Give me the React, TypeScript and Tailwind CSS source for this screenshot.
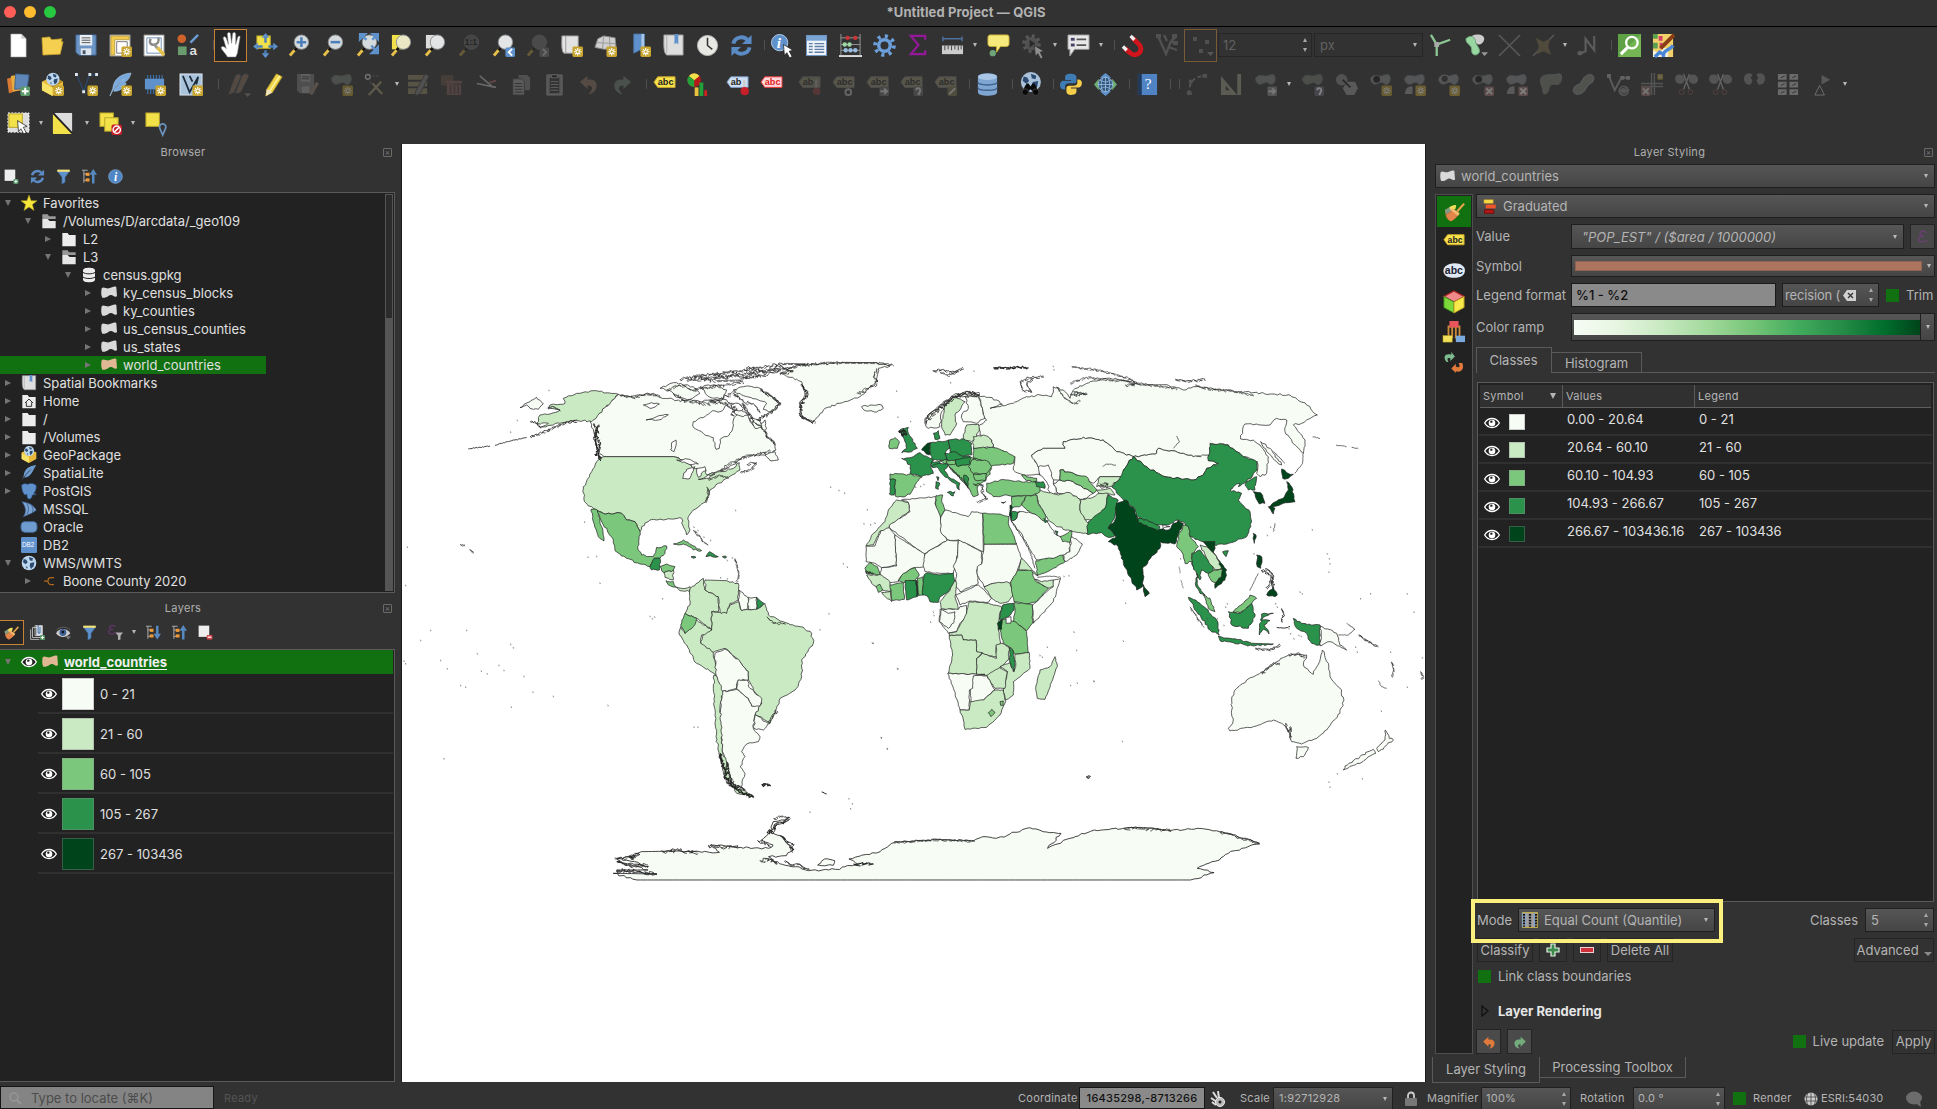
import React from "react";
import type { ReactNode } from "react";

/* ------------------------------------------------------------------ */
/* Icons (24 x 24 grid)                                                */
/* ------------------------------------------------------------------ */

const Svg = ({ s = 24, children, o = 1 }: { s?: number; children: ReactNode; o?: number }) => (
  <svg width={s} height={s} viewBox="0 0 24 24" opacity={o} className="shrink-0 overflow-visible">
    {children}
  </svg>
);

const Spark = ({ x = 13, y = 13, s = 11 }: { x?: number; y?: number; s?: number }) => (
  <g transform={`translate(${x} ${y}) scale(${s / 11})`}>
    <rect width="11" height="11" rx="1.5" fill="#c8a52e" />
    <path d="M5.5 1.5v8M1.5 5.5h8M2.7 2.7l5.6 5.6M8.3 2.7L2.7 8.3" stroke="#fff" strokeWidth="1.2" />
    <circle cx="5.5" cy="5.5" r="1.2" fill="#c8a52e" />
  </g>
);
const Box = ({ c = "#5b9a68", d = "M5 1.5v7M1.5 5h7", x = 14, y = 14 }: { c?: string; d?: string; x?: number; y?: number }) => (
  <g transform={`translate(${x} ${y})`}>
    <rect width="10" height="10" rx="1.5" fill={c} />
    <path d={d} stroke="#fff" strokeWidth="2" fill="none" />
  </g>
);
const Lens = ({ fill = "#d5dadd", children }: { fill?: string; children?: ReactNode }) => (
  <>
    <path d="M8.500 15L2 22.500" stroke="#e8c04a" strokeWidth="3" />
    <path d="M9 14.500l-2 2.500" stroke="#111" strokeWidth="3" />
    <circle cx="14" cy="8.500" r="7.500" fill={fill} stroke="#8b8f91" />
    {children}
  </>
);
const Cursor = ({ x = 12, y = 10 }: { x?: number; y?: number }) => (
  <path transform={`translate(${x} ${y})`} d="M0 0l10 6-4 1 3 5.500-2.500 1.500-3-5.500-2.500 3z" fill="#fff" stroke="#222" strokeWidth=".8" />
);
const Tag = ({ fill = "#f7e14c", ink = "#222", text = "abc", stroke = "#c9a92a" }: { fill?: string; ink?: string; text?: string; stroke?: string }) => (
  <>
    <path d="M1 9.500l4-5.500h18v11H5z" fill={fill} stroke={stroke} />
    <text x="5" y="12.800" fontSize="9.500" fontWeight="700" fill={ink} fontFamily="Liberation Sans, sans-serif">{text}</text>
  </>
);
const Blob = ({ f = "#8d9092", d = "M2 5c4-5 7-1 11-2s8-3 9 1-1 8-4 8-3-3-6-2-6 3-8 1-3-4-2-6z" }: { f?: string; d?: string }) => (
  <path d={d} fill={f} stroke="#6d7072" />
);

const Refresh = () => (
  <g fill="none" stroke="#5a8bc4" strokeWidth="4">
    <path d="M3.500 10C5 3 14 1.500 18 6M20.500 14C19 21 10 22.500 6 18" />
    <path d="M22.500 1v9.500h-10zM1.500 23v-9.500h10z" fill="#5a8bc4" stroke="none" />
  </g>
);
const Funnel = () => (
  <>
    <path d="M2 3h20l-7.500 10v8l-5 3V13z" fill="#5f92cc" stroke="#3e6896" />
    <path d="M2 1h20v3.500H2z" fill="#f3e27a" />
  </>
);
const Tree = ({ up = true }: { up?: boolean }) => (
  <>
    <path d="M0 2h9M3 2v20M3 8h5M3 18h5" stroke="#aaa" strokeWidth="1.600" fill="none" />
    <rect x="6" y="6" width="6" height="5" fill="#f09a38" />
    <rect x="6" y="15" width="6" height="5" fill="#f09a38" />
    {up ? <path d="M18 0l6 9h-4v14h-4V9h-4z" fill="#5689c0" /> : <path d="M18 23l6-9h-4V1h-4v13h-4z" fill="#5689c0" />}
  </>
);
const Brush = () => (
  <>
    <path d="M1 10c3-1 5-3 7-4l9 9c-2 4-6 6-9 8-3-1-5-3-6-6z" fill="#c9703a" />
    <path d="M1 10c3-1 5-3 7-4l3 3-8 6c-1-1-2-3-2-5z" fill="#7f9c80" />
    <path d="M8 6c2-1 4-2 6-1l-1 4-4 2-3-3z" fill="#efe05a" />
    <path d="M3 16l9-6 4 5c-2 4-5 6-8 8-3-1-4-3-5-7z" fill="#e2854a" />
    <path d="M9 8l9 6-2 3-9-7z" fill="#f3b96e" />
    <path d="M15 12l8-9" stroke="#e8a24c" strokeWidth="2.500" />
  </>
);
const Poly = ({ f = "#d9d9d9" }: { f?: string }) => (
  <path d="M1 5c3-3 7 1 11 0s8-4 11-2l1 14c-4 2-6-2-9-2-4 0-6 5-13 4-2-3-2-9-1-14z" fill={f} />
);
const Globe = ({ f = "#bcd6ee", l = "#2c4a70" }: { f?: string; l?: string }) => (
  <>
    <circle cx="12" cy="12" r="11" fill={f} />
    <path d="M4 6l4 1 2 4-3 3-4-3zM12 3l6 2-1 4-4-1zM14 12l6-1-1 6-4 4-2-5zM7 17l3 1-1 3z" fill={l} />
  </>
);
const Page = () => <path d="M4 0h11l5 5v19H4z" fill="#fff" stroke="#999" strokeWidth=".6" />;

const icons: Record<string, ReactNode> = {
  new: <><Page /><path d="M15 0v5h5" fill="#ccc" /></>,
  open: <path d="M1 4l8-1 2 3 11-1-1 3h2l-3 13-18 1z" fill="#f5cf50" stroke="#c79f2a" strokeWidth=".8" />,
  save: <><path d="M1 1h21v21H4l-3-3z" fill="#6c94c4" stroke="#456a99" /><path d="M5 1h13v11H5z" fill="#e8eef4" /><path d="M7 4h9M7 6.500h9M7 9h9" stroke="#555" /><path d="M6 15h11v7H6z" fill="#dfe5ec" /><path d="M8 17h3v4H8z" fill="#456" /></>,
  layout: <><path d="M1 1h21v22H1z" fill="#fff" stroke="#888" /><path d="M2 2h19v4H6v16H2z" fill="#f1cb4d" stroke="#a8872a" strokeWidth=".7" /><path d="M8 8h11v12H8z" fill="none" stroke="#777" /><Spark /></>,
  wrench: <><path d="M1 1h21v22H1z" fill="#fff" stroke="#888" /><path d="M4 4h15v16H4z" fill="none" stroke="#6c8fb8" /><path d="M8 5c-2 4 0 7 4 6s5-3 4-7" stroke="#888" strokeWidth="2.500" fill="none" /><path d="M12 11l4 5" stroke="#999" strokeWidth="3" /><path d="M15 14l7 8" stroke="#e6c04a" strokeWidth="3.500" /></>,
  style: <><circle cx="5" cy="5" r="4.500" fill="#d0622c" /><path d="M14 9l8-8" stroke="#6c9cd0" strokeWidth="2.500" /><rect x="1" y="13" width="9" height="9" fill="#6b9c70" /><text x="13" y="22" fontSize="14" fontWeight="700" fill="#ddd" fontFamily="Liberation Sans, sans-serif">a</text></>,
  hand: <path d="M8 24c-2-4-6-7-6-9 1-2 3-1 5 1L4 6c0-2 2-2 3 0l2 6-1-10c0-2 3-2 3 0l1 9 1-9c0-2 3-2 3 0v10l2-7c1-2 3-1 2 1l-2 12c0 2-1 4-2 6z" fill="#fff" stroke="#888" strokeWidth=".5" transform="translate(1 -1)" />,
  pan: <><rect x="3" y="2" width="14" height="13" fill="#f3e14a" stroke="#b9a52a" /><path d="M12 -1l4 5h-8zM12 25l4-5h-8zM-1 13l5-4v8zM25 13l-5-4v8z" fill="#5f92cc" /><path d="M12 3v6M12 17v4M3 13h6M15 13h6" stroke="#4c7fb9" strokeWidth="2.500" /></>,
  zin: <Lens><path d="M14 3.500v10M9 8.500h10" stroke="#4c7fb9" strokeWidth="2.600" /></Lens>,
  zout: <Lens><path d="M9 8.500h10" stroke="#4c7fb9" strokeWidth="2.600" /></Lens>,
  zfull: <><Lens /><path d="M4 0h6l-6 6zM23 0h-6l6 6zM23 20h-7l7-7z" fill="#5f92cc" stroke="#5f92cc" strokeWidth="2" /><path d="M6 2l5 4M21 2l-4 4M21 18l-5-6" stroke="#5f92cc" strokeWidth="2.500" /></>,
  zsel: <><rect x="2" y="1" width="12" height="15" fill="#f3e14a" /><Lens fill="#ebe9c4" /></>,
  zlay: <><rect x="2" y="1" width="12" height="14" fill="#ddd" /><Lens fill="#e2e4e5" /></>,
  znat: <Svg o={0.28}><Lens fill="#777"><text x="7" y="12" fontSize="9" fontWeight="700" fill="#000" fontFamily="Liberation Sans, sans-serif">1:1</text></Lens></Svg>,
  zlast: <><Lens fill="#e2e4e5" /><Box c="#5f92cc" d="M7 1.500L3.500 5 7 8.500" /></>,
  znext: <Svg o={0.28}><Lens fill="#888" /><Box c="#888" d="M3.500 1.500L7 5 3.500 8.500" /></Svg>,
  newmap: <><path d="M2 2h17v18H4c-3-3-2-12-2-18z" fill="#e3e3e3" stroke="#999" /><path d="M6 2v18" stroke="#999" /><Spark /></>,
  new3d: <><path d="M4 5l6-3 12 2 1 10-12 2-10-2z" fill="#cfcfcf" stroke="#888" /><path d="M10 2l-1 13M16 3l1 12M3 9l19 1" stroke="#999" /><Spark /></>,
  bmnew: <><path d="M6 0h11v20l-5-3-6 3z" fill="#5f92cc" stroke="#466f9f" /><path d="M14 0h3v14h-3z" fill="#a8c6e8" /><Spark /></>,
  bm: <><path d="M2 1h20v21H5c-4-2-3-14-3-21z" fill="#dedede" stroke="#999" /><path d="M5 2v18" stroke="#aaa" /><path d="M13 0h4v11l-2-2-2 2z" fill="#5f92cc" /></>,
  clock: <><circle cx="12" cy="12" r="10.500" fill="#e9e9e4" stroke="#bbb" /><path d="M12 4v8l5 4" stroke="#333" strokeWidth="1.600" fill="none" /></>,
  refresh: <Refresh />,
  ident: <><circle cx="9" cy="9" r="8.500" fill="#5f92cc" stroke="#b5cbe4" /><text x="6" y="15" fontSize="16" fontStyle="italic" fontWeight="700" fill="#fff" fontFamily="Liberation Serif, serif">i</text><Cursor x={13} y={11} /></>,
  table: <><rect x="1.500" y="1.500" width="21" height="21" fill="#eef3f8" stroke="#6c94c4" /><path d="M2 2h20v5H2z" fill="#7aa4d4" /><path d="M4 10h4M4 13h4M4 16h4M4 19h4M10 10h10M10 13h10M10 16h10M10 19h10" stroke="#5f7fa8" strokeWidth="1.400" /></>,
  abacus: <><path d="M2 0v22M22 0v22M2 4h20M2 11h20M2 17h20" stroke="#999" strokeWidth="1" /><path d="M0 23h24" stroke="#ddd" strokeWidth="2" /><g><circle cx="9" cy="4" r="2.300" fill="#c33" /><circle cx="17" cy="4" r="2.300" fill="#c33" /><circle cx="6" cy="11" r="2.300" fill="#9ed8a4" /><circle cx="11" cy="11" r="2.300" fill="#9ed8a4" /><circle cx="7" cy="17" r="2.300" fill="#9bd" /><circle cx="12" cy="17" r="2.300" fill="#9bd" /><circle cx="17" cy="17" r="2.300" fill="#9bd" /></g></>,
  gear: <><circle cx="12" cy="12" r="6" fill="none" stroke="#6ca0dc" strokeWidth="3.600" /><circle cx="12" cy="12" r="9.800" fill="none" stroke="#6ca0dc" strokeWidth="4" strokeDasharray="3.200 4.497" /></>,
  sigma: <path d="M19 6V2H4l8 9.500L4 21h15v-4" stroke="#96189a" strokeWidth="2.300" fill="none" />,
  ruler: <><path d="M2 5h20M2 2.500v5M22 2.500v5" stroke="#4d6f9c" strokeWidth="1.500" /><rect x="1" y="12" width="22" height="9" fill="#ccc" /><path d="M4 12v5M7.500 12v4M11 12v5M14.500 12v4M18 12v5M21 12v4" stroke="#444" /></>,
  tip: <><path d="M3 1h18c2 0 2 2 2 4v5c0 2-1 3-3 3h-6l-4 6v-6H4c-2 0-3-1-3-3V4c0-2 1-3 2-3z" fill="#f7ea7c" stroke="#c9b23a" /><circle cx="6" cy="20" r="3.300" fill="#6fa47a" /></>,
  run: <Svg o={0.45}><circle cx="11" cy="10" r="7" fill="#777" /><circle cx="11" cy="10" r="8" fill="none" stroke="#888" strokeWidth="3.500" strokeDasharray="3 3.280" /><path d="M9 6l6 4-6 4z" fill="#222" /><Cursor x={14} y={12} /></Svg>,
  form: <><path d="M1 1h22v15H8l-5 7v-7H1z" fill="#e8e8e8" stroke="#999" /><rect x="4" y="4" width="4" height="3" fill="#446" /><rect x="4" y="10" width="4" height="3" fill="#446" /><path d="M10 5.500h10M10 11.500h10" stroke="#555" strokeWidth="1.800" /></>,
  magnet: <><path d="M12 4l7 7c6 7-4 14-9 9l-6-5" stroke="#d2141c" strokeWidth="5" fill="none" /><path d="M10 2l4 4M2 13l4 4" stroke="#eee" strokeWidth="3.500" /></>,
  vtx: <Svg o={0.3}><path d="M3 3l8 18 5-13M9 2l3 6M22 3l-6 5M15 9l8 1M13 14l9 3" stroke="#999" strokeWidth="2.300" fill="none" /><path d="M1 1h5v4H1zM17 1h5v4h-5zM18 8h5v4h-5z" fill="#999" /></Svg>,
  pts: <Svg o={0.35}><rect x="4" y="4" width="4" height="4" fill="#888" /><rect x="16" y="7" width="4" height="4" fill="#888" /><rect x="10" y="16" width="4" height="4" fill="#888" /><path d="M18 19h7l-3.500 4z" fill="#999" /></Svg>,
  topo: <><path d="M1 1l6 10 14-5M7 11v12" stroke="#8cc795" strokeWidth="2.400" fill="none" /><rect x="4.500" y="8.500" width="5" height="5" fill="#aaa" /></>,
  topo2: <><path d="M8 2c6-3 14-1 13 4s-6 6-8 4z" fill="#ccc" /><path d="M2 5c4-4 9-3 10 2 0 5 5 7 4 12-3 5-9 3-8-3C8 11 2 11 2 5z" fill="#98d6a2" stroke="#6fa97b" /><path d="M18 19h7l-3.500 4z" fill="#999" /></>,
  cross: <Svg o={0.45}><path d="M1 1l22 22M23 1L1 23" stroke="#888" strokeWidth="1.600" /></Svg>,
  cross2: <Svg o={0.35}><path d="M1 23L23 1" stroke="#999" strokeWidth="1.500" /><path d="M4 4l8 4 7 -3-2 8 3 9-8-4-7 3 2-8z" fill="#86774f" /></Svg>,
  trace: <Svg o={0.4}><path d="M3 21l7-3V5l9 12V2" stroke="#999" strokeWidth="2.300" fill="none" /><circle cx="4" cy="20" r="2.500" fill="#999" /></Svg>,
  osm: <><rect width="24" height="24" fill="#74b653" /><path d="M0 0h24L0 24z" fill="#5fa246" /><circle cx="14.500" cy="9" r="6" stroke="#fff" strokeWidth="2.400" fill="none" /><path d="M10 14l-7 7" stroke="#fff" strokeWidth="3.200" /></>,
  qms: <><rect x="1" width="21" height="24" fill="#f2d16a" /><path d="M1 0h5v5H1zM1 9h5v6H1z" fill="#5aa04e" /><path d="M7 2h4v5H7zM8 9h3v6H8z" fill="#d33f6a" /><path d="M1 17l7 3 4-6 5 2v8H1z" fill="#f4f0df" /><path d="M12 24c-1-8 6-6 10-12M3 24l5-5 5 3" stroke="#4a86d8" strokeWidth="3.500" fill="none" /><path d="M9 15L23 1" stroke="#8a3d14" strokeWidth="4" /></>,

  ds: <><path d="M0 6l10-3 3 15-11 3z" fill="#d97a34" /><path d="M4 3l11-2 1 17-10 1z" fill="#e6ac3e" /><path d="M9 1l14 1-2 14-13 1z" fill="#5f86b8" stroke="#3f628f" /><Box /></>,
  gpkg: <><path d="M1 9l11-6 11 6v9l-11 6-11-6z" fill="#e9b93a" /><path d="M1 9l11 6v9L1 18z" fill="#f7e268" /><path d="M12 15l11-6-4-2-14 0z" fill="#b28a1e" /><g transform="translate(5 -1) scale(.62)"><Globe /></g><Spark /></>,
  vlay: <><path d="M2 2l7 17M15 2l-6 17M15 2h8" stroke="#2d4a72" strokeWidth="1.200" fill="none" /><path d="M0 0h3v3H0zM14 0h3v3h-3zM21 0h3v3h-3zM7.500 18h3v3h-3z" fill="#dde6f0" /><Spark /></>,
  feather: <><path d="M23 0C12 1 5 6 4 16L1 24c3-7 8-13 15-18-7 7-10 10-11 13 8 0 9-4 9-4l-2-1c5 0 6-3 6-3l-2-1c4-2 6-6 7-10z" fill="#7aa9de" stroke="#a9c8ea" strokeWidth=".6" /><Spark /></>,
  mem: <><path d="M5 2v20M8 2v20M11 2v20M14 2v20M17 2v20M20 2v14" stroke="#3c6ea5" strokeWidth="1.300" /><rect x="2" y="6" width="20" height="11" fill="#5f92cc" /><Spark /></>,
  vmesh: <><rect x="0" y="1" width="23" height="22" fill="#a9c3dc" stroke="#dfe8f1" /><path d="M3 3l7 17L19 4l-2 8M10 3l3 6" stroke="#1b2b3a" strokeWidth="1.800" fill="none" /><Spark /></>,
  pencils: <Svg o={0.4}><path d="M1 22L8 3c2-3 6-1 5 1L6 20zM8 21l7-18c2-3 7-2 6 1l-8 16z" fill="#8a6f5c" stroke="#666" /><path d="M17 21h7l-3.500 4z" fill="#888" /></Svg>,
  pencil: <><path d="M5 17L15 1l6 3L11 20l-7 4z" fill="#f0d44a" stroke="#b39a2a" /><path d="M8 19L18.500 3" stroke="#fff3a0" strokeWidth="1.500" /><path d="M5 17l6 3-7 4z" fill="#eee3c0" /></>,
  save2: <Svg o={0.33}><path d="M1 1h18v20H4l-3-3z" fill="#888" /><path d="M5 1h10v8H5z" fill="#bbb" /><path d="M6 14h8v7H6z" fill="#bbb" /><path d="M6 4h8M6 6h8" stroke="#444" /><path d="M14 22l7-13 3 2-7 12z" fill="#aa8e7a" /></Svg>,
  addp: <Svg o={0.35}><Blob f="#7d887c" /><Spark /></Svg>,
  vtool: <Svg o={0.4}><circle cx="4" cy="4" r="2.500" fill="none" stroke="#ccc" strokeWidth="1.500" /><path d="M5 6l3 6M9 3h8" stroke="#888" strokeDasharray="2 2" /><path d="M5 23L18 9M9 11l10 11" stroke="#a09570" strokeWidth="2.400" fill="none" /></Svg>,
  attr: <Svg o={0.35}><path d="M1 2h20v5H1zM1 9h20v5H1zM1 16h20v6H1z" fill="#9a8f66" /><path d="M9 19L19 1l4 2-9 18-5 3z" fill="#888" stroke="#444" /></Svg>,
  del: <Svg o={0.35}><path d="M0 2h13v11H0z" fill="#6a5244" /><path d="M5 8h17v3H5zM6 12h15v11H6z" fill="#926060" /><path d="M10 13v9M14 13v9M18 13v9" stroke="#444" strokeWidth="1.500" /></Svg>,
  cut: <Svg o={0.4}><path d="M5 3l14 12M2 11l20 4" stroke="#bbb" strokeWidth="1.600" /><path d="M15 10l7-2" stroke="#a66" strokeWidth="2" /></Svg>,
  copy: <Svg o={0.35}><path d="M10 2h9l3 3v13H10z" fill="#888" /><path d="M4 6h9l3 3v14H4z" fill="#aaa" stroke="#444" /><path d="M6 11h8M6 14h8M6 17h8M6 20h8" stroke="#333" /></Svg>,
  paste: <Svg o={0.35}><path d="M4 2h16v21H4z" fill="#999" stroke="#bbb" /><path d="M7 5h10v16H7z" fill="#333" /><path d="M8 9h8M8 12h8M8 15h8M8 18h8M9 2h6v3H9z" stroke="#bbb" /></Svg>,
  undo: <Svg o={0.4}><path d="M3 9l8-6v4c8-1 11 4 9 9-1 4-5 6-8 6 6-6 4-9-1-9v4z" fill="#8a7060" /></Svg>,
  redo: <Svg o={0.4}><path d="M21 9l-8-6v4C5 6 2 11 4 16c1 4 5 6 8 6-6-6-4-9 1-9v4z" fill="#6e7e70" /></Svg>,
  label: <Tag />,
  diagram: <><circle cx="7.500" cy="7.500" r="7" fill="#b51a1a" /><path d="M7.500 7.500L2 3a7 7 0 0 1 11 0z" fill="#f3e14a" /><path d="M7.500 7.500L2 3a7 7 0 0 0 5.500 11.500z" fill="#22a03a" /><path d="M8 15h4v9H8z" fill="#e8c040" /><path d="M13 10h4v14h-4z" fill="#22a03a" /><path d="M18 18h3v6h-3z" fill="#c22" /></>,
  label2: <><Tag fill="#cfe0f4" stroke="#7b9cc8" text="ab" /><path d="M19 7v9" stroke="#ccc" strokeWidth="2.500" /><circle cx="19.500" cy="19" r="4.300" fill="#c8202a" /></>,
  label3: <Tag fill="#ffd9dc" stroke="#e33" ink="#d22" />,
  lg1: <Svg o={0.3}><Tag fill="#a39f7a" stroke="#888" text="ab" /><path d="M19 7v9" stroke="#ccc" strokeWidth="2" /><circle cx="19.500" cy="19" r="4" fill="#a44" /></Svg>,
  lg2: <Svg o={0.33}><Tag fill="#a39f7a" stroke="#888" /><circle cx="17" cy="20" r="3" fill="none" stroke="#ccc" strokeWidth="2" /></Svg>,
  lg3: <Svg o={0.33}><Tag fill="#a39f7a" stroke="#888" /><Box c="#777" d="M1 5h6M5 2l3 3-3 3" /></Svg>,
  lg4: <Svg o={0.33}><Tag fill="#a39f7a" stroke="#888" /><Box c="#777" d="M3 4c0-4 5-2 4 1L5 9" /></Svg>,
  lg5: <Svg o={0.33}><Tag fill="#a39f7a" stroke="#888" /><Box c="#888355" d="M2 8l6-6" /></Svg>,
  db: <><path d="M2 4c0-5 20-5 20 0v16c0 5-20 5-20 0z" fill="#7fa6d2" /><ellipse cx="12" cy="4" rx="10" ry="3.300" fill="#a9c6e6" /><path d="M2 9.500c0 4 20 4 20 0M2 15c0 4 20 4 20 0" stroke="#40628c" strokeWidth="1.500" fill="none" /></>,
  meta: <><g transform="translate(1 -2) scale(.95)"><Globe f="#a9c2da" /></g><path d="M6 14l2-3h2l2 3 2-3h2l2 3 2 5h-6l-2-2-2 2H4z" fill="#0a0a0a" /><circle cx="6.500" cy="20" r="3.500" fill="#0a0a0a" stroke="#444" /><circle cx="17.500" cy="20" r="3.500" fill="#0a0a0a" stroke="#444" /></>,
  python: <><path d="M12 1c-5 0-6 2-6 4v3h7v1H4c-3 0-4 3-4 5s1 5 4 5h2v-4c0-2 2-3 4-3h6c2 0 3-1 3-3V5c0-3-3-4-7-4z" fill="#3f7cb4" transform="scale(.9)" /><path d="M11 23c5 0 6-2 6-4v-3h-6v-1h8c3 0 4-3 4-5s-1-4-4-4h-1v4c0 2-2 3-4 3H9c-2 0-3 1-3 3v3c0 3 2 4 5 4z" fill="#f5cf4a" transform="translate(1 1) scale(.95)" /></>,
  plug: <><path d="M12 0l6 5H6zM12 24l6-5H6z" fill="#5f92cc" /><path d="M0 12l5-6v12zM24 12l-5-6v12z" fill="#6fae72" /><circle cx="12" cy="12" r="7.500" fill="#33597f" stroke="#8fb3d6" /><path d="M12 4v16M4 12h16M6 7c4 3 8 3 12 0M6 17c4-3 8-3 12 0M9 5c-2 5-2 9 0 14M15 5c2 5 2 9 0 14" stroke="#9fc3e6" fill="none" strokeWidth=".8" /></>,
  help: <><rect x="2" y="1" width="20" height="22" fill="#4f83c4" /><rect x="2" y="1" width="4" height="22" fill="#223a5a" /><text x="9" y="17" fontSize="16" fill="#fff" fontFamily="Liberation Serif, serif">?</text></>,
  arc: <Svg o={0.35}><path d="M3 22C3 9 9 3 20 3" stroke="#aaa" strokeWidth="1.600" strokeDasharray="4 3" fill="none" /><path d="M1 19h5v4H1zM3 7h4v4H3zM17 1h5v4h-5z" fill="#888" /></Svg>,
  angle: <Svg o={0.4}><path d="M1 23V3l17 20zM6 18h4l-4-5z" fill="#998" fillRule="evenodd" /><path d="M18 1h4v22h-4z" fill="#998" /></Svg>,
  b1: <Svg o={0.33}><Blob /><Box c="#999" d="M1 5h6M5 2l3 3-3 3" /></Svg>,
  b2: <Svg o={0.38}><Blob f="#777c72" /><Box c="#667" d="M3 4c0-4 5-2 4 1L5 9" /></Svg>,
  b3: <Svg o={0.38}><circle cx="7" cy="7" r="6" fill="#888" /><path d="M13 9h8l3 7-4 7h-8l-4-7z" fill="#999" /><path d="M8 7l8 8" stroke="#222" strokeWidth="2" /></Svg>,
  b4: <Svg o={0.36}><Blob /><circle cx="8" cy="6.500" r="3.500" fill="#111" /><Spark /></Svg>,
  b5: <Svg o={0.38}><Blob /><path d="M2 22c0-6 4-9 8-8v8z" fill="#999" /><Spark /></Svg>,
  b6: <Svg o={0.38}><Blob /><circle cx="8" cy="6" r="4" fill="#333" stroke="#aaa" /><Spark /></Svg>,
  b7: <Svg o={0.36}><Blob /><circle cx="8" cy="6.500" r="3.500" fill="#111" /><Box c="#a77" d="M2 2l6 6M8 2L2 8" /></Svg>,
  b8: <Svg o={0.38}><Blob /><path d="M2 22c0-6 4-9 8-8v8z" fill="#999" /><Box c="#a77" d="M2 2l6 6M8 2L2 8" /></Svg>,
  b9: <Svg o={0.32}><path d="M2 5c4-5 12-2 18-4s4 11-1 11c-6-1-8 0-9 6-1 4-6 6-6 1 0-6-4-8-2-14z" fill="#8a8f82" stroke="#999" /></Svg>,
  b10: <Svg o={0.35}><path d="M14 3c6-3 9 1 7 5s-5 2-7 7-8 9-12 6 0-8 4-9 3-7 8-9z" fill="#8a8f82" stroke="#999" strokeWidth="1.500" /></Svg>,
  b11: <Svg o={0.4}><path d="M2 3l6 15L15 5h8" stroke="#999" strokeWidth="2" fill="none" /><path d="M0 1h4v4H0zM14 3h4v4h-4zM20 3h4v4h-4z" fill="#aaa" /><circle cx="17.500" cy="18.500" r="5.500" fill="#888" /><path d="M14 17c2-3 5-2 6 0M21 20c-2 3-5 2-6 0" stroke="#333" fill="none" /></Svg>,
  b12: <Svg o={0.33}><path d="M0 11h23M0 14h23M11 0v23M14 0v23" stroke="#999" strokeWidth="1.500" /><Box c="#a77" d="M2 2l6 6M8 2L2 8" x={0} /><Spark x={17} y={1} s={6} /></Svg>,
  b13: <Svg o={0.4}><path d="M0 6c0-6 9-6 10 0s-9 8-10 0zM14 6c0-6 9-6 10 0s-9 8-10 0z" fill="#888" /><path d="M9 1l6 16M15 1L9 17" stroke="#aaa" strokeWidth="1.500" /><circle cx="7" cy="20" r="2.500" fill="none" stroke="#855" /><circle cx="16" cy="20" r="2.500" fill="none" stroke="#855" /></Svg>,
  b14: <Svg o={0.33}><path d="M1 6c0-6 7-7 9-4l-2 3 2 3-2 4c-4 1-7-2-7-6zM23 6c0-6-7-7-9-4l2 3-2 3 2 4c4 1 7-2 7-6z" fill="#999" /></Svg>,
  b15: <Svg o={0.5}><path d="M1 1h9v6H1zM13 1h9v6h-9zM1 9h9v6H1zM13 9h9v6h-9zM1 17h9v6H1zM13 17h9v6h-9z" fill="#a3a3a3" /><path d="M4 5l4-2M16 5l4-2M4 13l4-2M16 13l4-2M4 21l4-2M16 21l4-2" stroke="#333" /></Svg>,
  b16: <Svg o={0.45}><path d="M11 2l9 5-9 5z" fill="#888" /><path d="M9 13l5 10H4z" fill="none" stroke="#bbb" /></Svg>,

  selr: <><rect x="1" y="1" width="22" height="20" fill="#ddd" stroke="#fff" strokeDasharray="2 1.500" /><rect x="2" y="2" width="14" height="14" fill="#f3e14a" stroke="#b9a52a" /><Cursor x={11} y={9} /></>,
  inv: <><path d="M1 1h20v20H1z" fill="#ddd" /><path d="M1 1v22h20z" fill="#f3e14a" /><path d="M1 1l20 21" stroke="#222" strokeWidth="2" /></>,
  desel: <><rect x="1" y="1" width="14" height="14" fill="#f3e14a" stroke="#b9a52a" /><rect x="6" y="6" width="14" height="14" fill="#f3e14a" stroke="#b9a52a" /><rect x="13" y="13" width="11" height="11" rx="2" fill="#c8202a" /><circle cx="18.500" cy="18.500" r="3.800" fill="none" stroke="#fff" strokeWidth="1.500" /><path d="M16 21l5-5" stroke="#fff" strokeWidth="1.500" /></>,
  selloc: <><rect x="2" y="1" width="14" height="14" fill="#f3e14a" stroke="#b9a52a" /><path d="M19.500 24l-3-7a3.300 3.300 0 1 1 6 0z" fill="none" stroke="#6c94c0" strokeWidth="1.800" /></>,

  addlay: <><path d="M1 1h17v18H1z" fill="#eee" /><rect x="15" y="16" width="8" height="8" rx="2" fill="#5b9a68" /><path d="M19 17.500v5M16.500 20h5" stroke="#fff" strokeWidth="1.500" /></>,
  funnel: <Funnel />,
  treeup: <Tree />,
  treedn: <Tree up={false} />,
  info: <><circle cx="12" cy="12" r="11" fill="#4f86c6" stroke="#8db3de" /><text x="9.500" y="19" fontSize="19" fontStyle="italic" fontWeight="700" fill="#fff" fontFamily="Liberation Serif, serif">i</text></>,
  brush: <Brush />,
  group: <><path d="M1 7v16h14M4 4v16h14V4zM8 1v16h12V1z" fill="none" stroke="#bbb" strokeWidth="1.500" /><path d="M10 1h9v16h-9z" fill="#dfe6ee" /><path d="M13 0v13h3V3" fill="none" stroke="#35639a" strokeWidth="1.500" /><rect x="16" y="16" width="8" height="8" rx="2" fill="#5b9a68" /><path d="M20 17.500v5M17.500 20h5" stroke="#fff" strokeWidth="1.500" /></>,
  eye2: <><path d="M0 13c6-9 16-9 23 0-7 8-17 8-23 0z" fill="#ccc" /><circle cx="11" cy="12" r="5.500" fill="#3d5f93" /><circle cx="11" cy="11" r="2" fill="#111" /><path d="M1 8c6-6 16-6 22 0" stroke="#777" fill="none" /><path d="M15 18h9l-4.500 5z" fill="#777" /></>,
  eps: <><path d="M12 3C8-1 1 1 3 5c1 2 3 2 5 2C3 7 0 9 1 12c2 4 8 3 11 0" fill="none" stroke="#5f3567" strokeWidth="2.200" /><path d="M12 12h12l-4 5v6l-4 1v-7z" fill="#b0b0b0" /></>,
  rmlay: <><path d="M1 1h17v18H1z" fill="#eee" /><rect x="14" y="16" width="9" height="7" rx="1" fill="#d8444c" /><path d="M15.500 19.500h6" stroke="#fff" strokeWidth="2" /></>,

  star: <path d="M12 0l3 8.500 9 .2-7 5.500 2.500 9L12 18l-7.500 5.200 2.500-9L0 8.700l9-.2z" fill="#f7e63a" stroke="#b8a31e" strokeWidth=".8" />,
  fopen: <><path d="M2 2h8l2 3h10v4H2z" fill="#999" /><path d="M2 9l8 0 3 3h9v11H2z" fill="#e6e6e6" /></>,
  folder: <path d="M2 3h8l2 3h10v17H2z" fill="#ececec" />,
  gdb: <><path d="M3 5c0-5 18-5 18 0v14c0 5-18 5-18 0z" fill="#ececec" /><path d="M3 8c3 3 15 3 18 0M3 15c3 3 15 3 18 0" stroke="#222" strokeWidth="1.500" fill="none" /></>,
  poly: <Poly />,
  polyo: <Poly f="#e0b994" />,
  home: <><path d="M2 3h8l2 3h10v17H2z" fill="#ececec" /><path d="M6 15l6-6 6 6M8 14v6h8v-6" fill="none" stroke="#333" strokeWidth="1.500" /></>,
  gpk: <><path d="M1 8l11-4 11 4v10l-11 6-11-6z" fill="#e9b93a" /><path d="M1 9l11 6v9L1 18z" fill="#f7e268" /><g transform="translate(4 -2) scale(.68)"><Globe /></g></>,
  feath: <path d="M23 0C12 1 5 6 4 16L1 24c3-7 8-13 15-18-7 7-10 10-11 13 8 0 12-8 15-14z" fill="#6f9ccf" />,
  pg: <path d="M1 3c4-3 7-2 9-1 4-2 9-2 13 2 0 6-2 10-4 11l4 2-6 1c-1 5-2 6-5 6s-3-3-3-7l-3 1C2 15 1 8 1 3z" fill="#5f92cc" stroke="#2d5180" />,
  ms: <path d="M1 1c10 1 19 5 22 13l-6 4-14 6c5-6 5-15-2-23z M8 2c4 6 4 12 1 18M14 4c4 4 5 9 3 14" fill="#7aa4d4" stroke="#2d4a72" />,
  ora: <rect x="0" y="4" width="24" height="16" rx="6" fill="#6f9ccf" stroke="#3f6797" strokeWidth="1.500" />,
  db2: <><rect x="0" y="0" width="24" height="24" rx="2" fill="#5f92cc" /><text x="1.500" y="15.500" fontSize="9.500" fill="#fff" fontFamily="Liberation Sans, sans-serif">DB2</text></>,
  globe: <Globe />,
  conn: <path d="M2 12h8M22 5h-6c-4 0-6 3-6 7s2 7 6 7h6" fill="none" stroke="#b0681e" strokeWidth="2.500" transform="translate(3 3) scale(.75)" />,
  abcw: <><path d="M4 5c2-3 14-4 17 0 4 2 4 9 0 11-4 3-14 3-18 0-4-3-3-9 1-11z" fill="#dfe9f5" /><text x="2" y="14" fontSize="11.500" fontWeight="700" fill="#223" fontFamily="Liberation Sans, sans-serif">abc</text></>,
  cube: <><path d="M12 0l11 6-11 6L1 6z" fill="#f08a8a" stroke="#a22" strokeWidth="1.500" /><path d="M1 6l11 6v12L1 18z" fill="#7cd83a" stroke="#3a8a1a" /><path d="M23 6l-11 6v12l11-6z" fill="#f7e94a" stroke="#b49a1e" /></>,
  hier: <><path d="M6 19V6h12v13M10 4v15M14 4v15" stroke="#c98a3a" strokeWidth="2" fill="none" /><rect x="7" y="0" width="10" height="7" fill="#e8555c" /><rect x="0" y="16" width="10" height="7" fill="#f3e05a" stroke="#b9a52a" strokeWidth=".6" /><rect x="14" y="16" width="10" height="7" fill="#7aa9de" /></>,
  hist: <><path d="M4 12c-5-6-1-10 5-8V1l4 5-5 5V8C5 7 4 8 6 12z" fill="#7dbb90" /><path d="M21 13c3 7-2 11-7 9v2l-5-5 5-5v3c4 2 5 0 3-4z" fill="#e0793a" /></>,
  orange: <path d="M2 11l9-8v5c9-1 12 4 10 9-1 4-5 6-8 6 3-4 4-7-2-7v4z" fill="#e07a3a" />,
  green: <path d="M22 11l-9-8v5C4 7 1 12 3 17c1 4 5 6 8 6-3-4-4-7 2-7v4z" fill="#74ab7c" />,
  grad: <><path d="M3 1h15v6H3z" fill="#f7d94a" stroke="#a8801e" strokeWidth=".8" /><path d="M6 9h16v6H6z" fill="#f2542a" /><path d="M4 17h15v6H4z" fill="#b01818" stroke="#600" /></>,
  quant: <><rect x="1" y="1" width="22" height="22" fill="#a0a0a0" stroke="#d2b73c" strokeWidth="1.500" /><path d="M3 3v19M12 3v19M21 3v19" stroke="#111" strokeWidth="3.500" strokeDasharray="2.500 1.800" /><path d="M5.500 1v22M18.500 1v22M0.500 1v22" stroke="#7ea2d0" strokeWidth="1.600" /></>,
};

const Icon = ({ n, s = 24 }: { n: string; s?: number }) => <Svg s={s}>{icons[n]}</Svg>;

const EyeIcon = ({ s = 16 }: { s?: number }) => (
  <svg width={s} height={s} viewBox="0 0 24 24" className="shrink-0">
    <path d="M1 12c5-9 17-9 22 0-5 9-17 9-22 0z" fill="#222" stroke="#fff" strokeWidth="2" />
    <circle cx="12" cy="12" r="5" fill="#fff" />
    <circle cx="11" cy="10" r="1.800" fill="#222" />
  </svg>
);

const Down = ({ c = "border-t-[#b9b9b9]" }: { c?: string }) => (
  <span className={`h-0 w-0 shrink-0 border-x-[2.500px] border-t-[4px] border-x-transparent ${c}`} />
);
const Spin = () => (
  <span className="flex shrink-0 flex-col items-center gap-[6px]">
    <span className="h-0 w-0 border-x-2 border-b-4 border-x-transparent border-b-[#a8a8a8]" />
    <span className="h-0 w-0 border-x-2 border-t-4 border-x-transparent border-t-[#a8a8a8]" />
  </span>
);

/* ------------------------------------------------------------------ */
/* Toolbars                                                            */
/* ------------------------------------------------------------------ */

const T = ({ n }: { n: string }) => (
  <div className="flex w-[34px] shrink-0 items-center justify-center"><Icon n={n} s={23} /></div>
);
const Ts = ({ list }: { list: string }) => <>{list.split(" ").map((n, i) => <T key={i} n={n} />)}</>;
const Sep = ({ w }: { w: string }) => (
  <div className={`flex shrink-0 justify-end ${w}`}><div className="h-[10px] w-px bg-[#505050]" /></div>
);
const Drop = ({ w = "w-[12px]" }: { w?: string }) => (
  <div className={`flex shrink-0 items-center justify-center ${w}`}><Down /></div>
);

function Toolbars() {
  return (
    <div className="flex flex-col">
      <div className="flex h-[36px] items-center pl-px">
        <Ts list="new open save layout wrench style" />
        <Sep w="w-[9px]" />
        <div className="mr-px flex h-[33px] w-[33px] shrink-0 items-center justify-center border border-[#c98136] bg-[#262626]"><Icon n="hand" s={25} /></div>
        <Ts list="pan zin zout zfull zsel zlay znat zlast znext newmap new3d bmnew bm clock refresh" />
        <Sep w="w-[7px]" />
        <Ts list="ident table abacus gear sigma ruler" />
        <Drop />
        <Ts list="tip run" />
        <Drop />
        <Ts list="form" />
        <Drop />
        <Sep w="w-[8px]" />
        <Ts list="magnet" />
        <div className="flex w-[35px] shrink-0 items-center justify-center"><Icon n="vtx" /></div>
        <div className="flex h-[33px] w-[33px] shrink-0 items-center justify-center border border-[#7a5a34]"><Icon n="pts" /></div>
        <div className="ml-px flex h-6 w-[94px] shrink-0 items-center justify-between border border-[#262626] px-1 text-[13px] text-[#616161]">12<Spin /></div>
        <div className="ml-[2px] mr-px flex h-6 w-[109px] shrink-0 items-center justify-between border border-[#262626] px-[5px] text-[13px] text-[#616161]">px<Down /></div>
        <Ts list="topo topo2 cross cross2" />
        <Drop w="w-[10px]" />
        <Ts list="trace" />
        <Sep w="w-[8px]" />
        <Ts list="osm qms" />
      </div>
      <div className="mt-[2px] flex h-[38px] items-center pl-px">
        <Ts list="ds gpkg vlay feather mem" />
        <div className="w-[3px] shrink-0" />
        <Ts list="vmesh" />
        <Sep w="w-[11px]" />
        <div className="w-[3px] shrink-0" />
        <Ts list="pencils pencil save2 addp vtool" />
        <Drop w="w-[9px]" />
        <Ts list="attr del cut copy paste undo redo" />
        <Sep w="w-[8px]" />
        <Ts list="label diagram" />
        <div className="w-[5px] shrink-0" />
        <Ts list="label2 label3" />
        <div className="w-[4px] shrink-0" />
        <Ts list="lg1 lg2 lg3 lg4 lg5" />
        <Sep w="w-[8px]" />
        <Ts list="db" />
        <Sep w="w-[9px]" />
        <Ts list="meta" />
        <Sep w="w-[7px]" />
        <Ts list="python plug" />
        <Sep w="w-[8px]" />
        <Ts list="help" />
        <Sep w="w-[7px]" />
        <Sep w="w-[9px]" />
        <Ts list="arc angle b1" />
        <Drop w="w-[13px]" />
        <Ts list="b2 b3 b4 b5 b6 b7 b8 b9 b10 b11 b12 b13 b13 b14 b15 b16" />
        <Drop w="w-[12px]" />
      </div>
      <div className="mt-[1px] flex h-[38px] items-center pl-px">
        <Ts list="selr" /><Drop w="w-[11px]" />
        <Ts list="inv" /><Drop w="w-[13px]" />
        <Ts list="desel" /><Drop w="w-[11px]" />
        <Ts list="selloc" />
      </div>
    </div>
  );
}

/* ------------------------------------------------------------------ */
/* Left docks                                                          */
/* ------------------------------------------------------------------ */

const DockTitle = ({ children }: { children: ReactNode }) => (
  <div className="flex h-4 items-center text-[11px] tracking-[0.3px] text-[#b0b0b0]">
    <span className="flex-1 pr-[17px] text-center">{children}</span>
    <span className="mr-[3px] flex h-[9px] w-[9px] items-center justify-center rounded-[1px] border border-[#6a6a6a] text-[8px] leading-none text-[#777]">×</span>
  </div>
);

const browser: [number, "open" | "closed" | "", string, string][] = [
  [0, "open", "star", "Favorites"],
  [1, "open", "fopen", "/Volumes/D/arcdata/_geo109"],
  [2, "closed", "folder", "L2"],
  [2, "open", "fopen", "L3"],
  [3, "open", "gdb", "census.gpkg"],
  [4, "closed", "poly", "ky_census_blocks"],
  [4, "closed", "poly", "ky_counties"],
  [4, "closed", "poly", "us_census_counties"],
  [4, "closed", "poly", "us_states"],
  [4, "closed", "polyo", "world_countries"],
  [0, "closed", "bm", "Spatial Bookmarks"],
  [0, "closed", "home", "Home"],
  [0, "closed", "folder", "/"],
  [0, "closed", "folder", "/Volumes"],
  [0, "closed", "gpk", "GeoPackage"],
  [0, "closed", "feath", "SpatiaLite"],
  [0, "closed", "pg", "PostGIS"],
  [0, "", "ms", "MSSQL"],
  [0, "", "ora", "Oracle"],
  [0, "", "db2", "DB2"],
  [0, "open", "globe", "WMS/WMTS"],
  [1, "closed", "conn", "Boone County 2020"],
];

const Arrow = ({ st }: { st: string }) => (
  <span className="flex w-4 shrink-0 items-center justify-center">
    {st === "open" && <span className="h-0 w-0 border-x-[3px] border-t-[6px] border-x-transparent border-t-[#757575]" />}
    {st === "closed" && <span className="h-0 w-0 border-y-[3px] border-l-[6px] border-y-transparent border-l-[#757575]" />}
  </span>
);

const classes = [
  { c: "bg-[#f7fcf5]", legend: "0 - 21", values: "0.00 - 20.64" },
  { c: "bg-[#caeac3]", legend: "21 - 60", values: "20.64 - 60.10" },
  { c: "bg-[#7bc87c]", legend: "60 - 105", values: "60.10 - 104.93" },
  { c: "bg-[#2a924a]", legend: "105 - 267", values: "104.93 - 266.67" },
  { c: "bg-[#00441b]", legend: "267 - 103436", values: "266.67 - 103436.16" },
];

const DockBar = ({ list }: { list: string }) => (
  <>{list.split(" ").map((n) => <div key={n} className="flex w-[26px] shrink-0 items-center justify-center"><Icon n={n} s={15} /></div>)}</>
);

function LeftDocks() {
  return (
    <div className="flex w-[395px] shrink-0 flex-col">
      <DockTitle>Browser</DockTitle>
      <div className="flex h-8 items-center pl-0"><div className="-ml-[2px] flex"><DockBar list="addlay refresh funnel treeup info" /></div></div>
      <div className="flex h-[401px] border-y border-r border-[#5a5a5a] bg-[#222222] pt-px">
        <div className="flex-1">
          {browser.map(([d, st, ic, label]) => (
            <div key={label} className={`flex h-[18px] items-center text-[13px] text-[#e0e0e0] ${ic === "polyo" ? "w-[266px] bg-[#11700f]" : ""}`}>
              <span className="shrink-0" style={{ width: d * 20 }} />
              <Arrow st={st} />
              <span className="mx-[5px] flex w-4 shrink-0 justify-center"><Icon n={ic} s={16} /></span>
              <span className="ml-px whitespace-nowrap pt-px">{label}</span>
            </div>
          ))}
        </div>
        <div className="mr-px flex w-2 flex-col pb-px pt-0">
          <div className="h-[125px] border border-[#555] bg-[#2b2b2b]" />
          <div className="flex-1 bg-[#555555]" />
        </div>
      </div>
      <div className="mt-[7px]"><DockTitle>Layers</DockTitle></div>
      <div className="flex h-[33px] items-center">
        <div className="-mt-px flex h-[25px] w-6 items-center justify-center border border-l-0 border-[#c98136] bg-[#262626]"><Icon n="brush" s={15} /></div>
        <div className="-mt-px flex">
          <DockBar list="group eye2 funnel eps" />
          <Drop w="w-[12px]" />
          <DockBar list="treedn treeup rmlay" />
        </div>
      </div>
      <div className="flex-1 border-y border-r border-[#5a5a5a] bg-[#222222]">
        <div className="mr-px flex h-6 items-center bg-[#11700f] text-[13px] font-bold text-[#f0f0f0]">
          <Arrow st="open" /><span className="ml-[5px]"><EyeIcon /></span>
          <span className="ml-[5px]"><Icon n="polyo" s={16} /></span>
          <span className="ml-[6px] underline underline-offset-2">{"world_countries"}</span>
        </div>
        {classes.map((k) => (
          <div key={k.legend} className="ml-[38px] mr-px flex h-10 items-center border-b-2 border-[#303030] pt-px text-[13px] text-[#e0e0e0]">
            <span className="ml-[3px]"><EyeIcon /></span>
            <span className={`ml-[5px] h-8 w-8 border border-[#8a8a8a]/40 ${k.c}`} />
            <span className="ml-[6px] pt-px">{k.legend}</span>
          </div>
        ))}
      </div>
    </div>
  );
}

/* ------------------------------------------------------------------ */
/* Map                                                                 */
/* ------------------------------------------------------------------ */

const shades = ["#f7fcf5", "#caeac3", "#7bc87c", "#2a924a", "#00441b"];

const noise = (n: number) => {
  const v = Math.sin(n) * 43758.5453;
  return v - Math.floor(v) - 0.5;
};

/** Splits every edge into short pieces and nudges them so that borders look surveyed. */
function rugged(points: string, amp: number, closed: boolean, step = 8) {
  const p = points.trim().split(/\s+/).map((q) => q.split(",").map(Number));
  const out: string[] = [];
  const count = closed ? p.length : p.length - 1;
  for (let i = 0; i < count; i++) {
    const a = p[i];
    const b = p[(i + 1) % p.length];
    const len = Math.hypot(b[0] - a[0], b[1] - a[1]);
    const n = Math.max(1, Math.round(len / step));
    const straight = len > 60 && (Math.abs(a[0] - b[0]) < 3 || Math.abs(a[1] - b[1]) < 3);
    const flip = a[0] + a[1] * 0.7 > b[0] + b[1] * 0.7;
    const [s, e] = flip ? [b, a] : [a, b];
    for (let k = 0; k < n; k++) {
      const j = flip ? n - k : k;
      const t = j / n;
      const on = straight || j === 0 || j === n ? 0 : amp;
      const x = s[0] + (e[0] - s[0]) * t + on * 2 * noise(s[0] * 3.1 + e[1] * 1.7 + j * 12.9);
      const y = s[1] + (e[1] - s[1]) * t + on * 2 * noise(s[1] * 2.3 + e[0] * 4.1 + j * 78.2);
      out.push(`${x.toFixed(1)},${y.toFixed(1)}`);
    }
  }
  if (!closed) out.push(p[p.length - 1].join(","));
  return out.join(" ");
}

const Lands = ({ list, amp = 2.8 }: { list: [number, string][]; amp?: number }) => (
  <>
    {list.map(([k, d], i) => (
      <polygon key={i} points={rugged(d, amp, true)} fill={k < 0 ? "#fff" : shades[k]} stroke="#262626" strokeWidth={2.2} strokeLinejoin="round" />
    ))}
  </>
);
const Scribbles = ({ list }: { list: [number, number, string][] }) => (
  <>
    {list.map(([amp, w, d], i) => (
      <g key={i} fill="none" stroke="#262626" strokeWidth={w}>
        <polyline points={rugged(d, amp * 1.3, false, 4)} />
        {amp > 1 && <polyline points={rugged(d, amp * 1.5, false, 5)} transform="translate(2 3)" strokeDasharray="14 5" />}
      </g>
    ))}
  </>
);
const Specks = ({ d }: { d: string }) => (
  <>
    {d.split(" ").map((q, i) => {
      const [x, y] = q.split(",").map(Number);
      return <path key={i} d={`M${x} ${y}l3 1l-1 3`} stroke="#555" strokeWidth={1.8} fill="none" />;
    })}
  </>
);

const americas: [number, string][] = [
  [0, "475,163 505,170 540,165 580,160 600,172 640,178 660,185 690,178 720,185 750,180 790,178 812,190 850,195 862,222 870,245 890,265 915,240 920,290 945,310 948,330 930,345 860,345 830,365 800,385 760,398 735,408 715,420 700,385 690,370 640,350 432,350 410,330 405,290 390,245"],
  [-1, "758,212 740,225 700,245 700,262 730,280 760,293 768,328 778,325 780,298 808,285 818,265 820,240 850,205 835,190 800,195 780,215"],
  [0, "820,150 860,138 900,145 930,165 960,190 935,215 910,208 920,190 895,180 860,170 830,160"],
  [0, "600,145 640,128 700,140 720,160 690,178 650,172 635,155"],
  [0, "720,140 760,135 800,150 790,175 750,172"],
  [0, "815,205 850,215 870,225 850,230 825,222"],
  [0, "868,235 900,240 905,260 885,265"],
  [0, "915,345 945,335 955,360 930,362"],
  [1, "475,163 395,245 350,240 300,250 240,262 265,250 230,250 240,225 270,222 300,210 265,205 270,195 315,190 310,175 350,160 400,152"],
  [0, "180,203 230,172 250,192 235,208 210,205 200,195"],
  [1, "432,350 640,350 690,372 700,385 735,385 740,405 780,395 820,385 838,368 840,390 805,412 775,430 750,450 740,485 700,510 685,530 690,570 680,585 668,555 665,535 610,540 570,540 545,560 540,575 525,545 500,540 485,520 430,520 410,510 385,498 372,480 370,440 395,395 410,365"],
  [-1, "668,415 680,388 705,380 690,415"],
  [-1, "650,360 690,358 715,372 690,374"],
  [-1, "710,385 735,380 738,392 715,412"],
  [-1, "715,418 745,405 765,402 740,415"],
  [-1, "550,195 575,188 598,192 570,205"],
  [-1, "558,240 590,230 625,224 595,240"],
  [-1, "632,330 635,308 648,300 642,335"],
  [2, "393,508 412,510 425,560 432,603 415,590 400,545"],
  [2, "412,512 430,520 485,520 500,540 525,545 540,575 533,620 545,645 580,650 590,622 620,618 615,640 600,655 583,655 572,680 540,672 500,655 465,632 460,600 430,555"],
  [3, "583,655 600,655 598,690 575,690 570,678"],
  [2, "600,680 620,672 645,680 640,690 612,698"],
  [1, "612,698 640,690 640,720 615,712"],
  [2, "618,722 640,725 650,742 632,738"],
  [1, "650,742 672,746 690,740 688,755 660,752"],
  [2, "640,612 670,600 725,632 700,630 670,612"],
  [3, "738,650 748,635 775,650"],
  [3, "693,650 708,652 700,655"],
  [3, "787,650 800,651 795,655"],
  [1, "690,745 730,715 735,750 775,770 775,815 755,815 755,870 710,835 675,820 690,795"],
  [1, "735,720 800,722 835,730 835,780 810,790 800,820 780,818 775,770 735,750"],
  [0, "838,750 865,775 860,810 845,812 835,780"],
  [0, "865,772 890,772 890,808 865,808"],
  [3, "890,772 912,790 900,808 890,806"],
  [1, "755,815 800,820 810,795 835,785 845,812 890,808 915,790 925,825 970,845 1020,860 1055,880 1060,910 1025,960 1025,1010 1005,1050 960,1075 950,1105 930,1150 885,1120 905,1090 865,1020 865,995 840,965 795,925 760,937 735,930 722,905 730,875 755,870"],
  [1, "662,860 675,880 710,840 755,870 725,885 722,910 760,937 770,1005 710,970 680,915 658,885"],
  [2, "675,820 710,835 700,860 675,880 662,855"],
  [0, "765,940 795,927 840,965 865,995 865,1020 835,1020 830,1045 785,1055 768,1005"],
  [0, "785,1055 830,1048 865,1075 875,1098 905,1090 885,1125 880,1165 900,1190 895,1205 860,1212 845,1235 855,1250 840,1280 855,1300 845,1340 800,1330 790,1240 778,1150"],
  [0, "835,1020 862,1020 870,1045 905,1075 900,1098 875,1098 865,1075 830,1048"],
  [1, "762,1005 770,1008 788,1055 780,1100 788,1240 805,1270 810,1320 840,1345 880,1368 830,1360 795,1310 780,1250 768,1190 762,1060"],
  [0, "885,1125 925,1150 910,1170 882,1165"],
  [0, "960,100 1010,75 1080,72 1150,68 1250,68 1290,78 1255,85 1250,125 1220,150 1200,170 1140,190 1095,205 1060,245 1025,235 1018,190 1035,165 1025,125 990,112"],
  [0, "1205,200 1230,195 1265,195 1270,205 1250,216 1215,212"],
];

const americasInk: [number, number, string][] = [
  [3, 2.2, "660,118 720,105 780,100 840,92 900,80 980,70 1040,72"],
  [3, 2, "680,122 760,112 830,105 900,92 960,86 1010,78"],
  [4, 2, "700,110 770,122 840,120 900,105 960,92"],
  [4, 2, "860,82 920,95 960,80 1000,92 960,100"],
  [3, 2, "760,98 800,115 820,98 850,112 880,98 900,110"],
  [3, 2, "620,148 660,135 700,150 750,140 800,132 850,128"],
  [4, 1.8, "640,160 680,182 740,190 790,172 830,150"],
  [4, 1.8, "750,180 790,190 830,205 812,225"],
  [4, 1.8, "820,160 850,185 880,190 900,215"],
  [3, 2, "1010,75 1080,70 1150,67 1250,68 1300,76"],
  [3.5, 3, "1022,135 1042,160 1020,190 1020,225 1050,242 1065,245"],
  [3, 2, "1250,85 1240,110 1252,125 1225,145 1190,160"],
  [3, 2.6, "900,150 935,170 960,190 935,210 920,222 890,238"],
  [3, 2.2, "845,190 862,210 880,245 905,262 918,285 945,312"],
  [3, 2, "480,166 520,172 560,162 600,168"],
  [4, 3, "402,250 412,270 402,300 415,330 420,360"],
  [4, 3, "418,255 408,280 420,310 405,345 425,355"],
  [2, 2.6, "350,242 320,245 290,258 260,272 210,290"],
  [1, 2.6, "200,292 165,300 130,308 105,316"],
  [1, 2.6, "90,318 60,322 25,326"],
  [3, 2, "240,262 225,245 210,245"],
  [3, 2, "262,205 285,202 300,210"],
  [3, 2, "860,372 890,368 870,390 840,398"],
  [3, 2, "780,390 820,365 860,350 930,332"],
  [3, 2, "740,440 745,465 738,485"],
  [2, 2, "745,420 775,405 805,412"],
  [2, 1.8, "700,570 715,585 725,600 745,615"],
  [2, 2, "825,655 832,680 835,705 828,725"],
  [2, 2, "920,830 940,848 975,850"],
  [2, 2.4, "925,1150 935,1130 950,1110"],
  [4, 4, "782,1240 788,1275 795,1305 815,1335 845,1355 880,1368"],
  [4, 3, "800,1265 805,1300 825,1335 855,1350"],
  [2, 4, "905,1333 930,1335"],
  [1, 3, "1085,1356 1100,1362"],
  [2, 2, "940,1435 965,1428 990,1432"],
  [2, 1.8, "0,613 15,615"],
  [2, 1.8, "28,628 40,640"],
];

const oldWorld: [number, string][] = [
  [0, "415,165 470,180 487,193 465,200 450,205 480,200 520,190 560,170 600,165 635,170 640,140 670,150 690,175 700,150 740,130 800,115 850,120 900,135 980,134 1030,150 1060,140 1130,148 1200,155 1290,162 1350,165 1400,195 1432,225 1400,240 1385,250 1360,255 1375,275 1395,300 1390,340 1370,320 1335,275 1340,240 1310,235 1290,255 1215,252 1202,297 1240,300 1260,315 1285,350 1280,400 1262,410 1250,400 1252,365 1210,350 1165,315 1115,310 1110,345 1060,350 1030,340 955,325 950,340 880,350 830,335 790,300 730,292 670,305 675,325 610,325 575,345 590,370 600,385 600,405 550,405 520,390 525,350 500,340 460,320 455,300 420,285 415,260 440,240 435,235"],
  [0, "1262,305 1290,325 1325,375 1310,365 1280,335"],
  [0, "255,235 300,195 340,165 380,155 420,165 400,170 350,170 320,190 305,215 300,260 265,265 255,250"],
  [1, "315,195 340,170 375,185 360,210 345,225 350,250 330,285 315,285 305,250"],
  [0, "375,170 415,170 435,235 410,250 370,245 365,225 385,205"],
  [0, "880,350 950,340 955,325 1030,340 1060,350 1105,345 1105,362 1135,370 1100,385 1090,405 1060,420 975,410 925,385"],
  [0, "575,345 610,325 675,325 670,305 730,292 790,300 830,335 880,350 850,390 850,410 780,410 760,430 700,400 660,390 660,420 640,420 600,385"],
  [-1, "595,380 625,375 635,400 640,430 655,460 630,462 622,430 600,405"],
  [0, "640,430 660,420 700,425 760,460 740,475 720,478 690,460 655,460"],
  [2, "660,390 700,400 740,410 770,450 760,460 700,425 660,420"],
  [1, "780,410 850,410 810,440 770,440"],
  [1, "770,450 810,445 825,465 780,465"],
  [1, "580,440 610,455 655,465 690,458 720,478 720,510 745,550 745,582 700,575 650,560 620,530 595,490"],
  [1, "720,480 750,475 780,460 805,460 795,505 760,540 735,540 720,510"],
  [3, "805,465 835,480 820,540 805,565 830,590 800,590 785,578 740,582 745,545 795,505"],
  [3, "880,350 925,385 975,410 1060,420 1090,405 1100,385 1135,370 1105,362 1110,310 1165,315 1210,350 1250,365 1252,390 1220,425 1195,440 1200,430 1190,432 1170,450 1205,460 1195,480 1230,515 1235,545 1220,590 1160,612 1120,615 1090,605 1050,590 1035,550 1015,540 985,555 955,555 890,530 885,505 855,485 815,440 845,405 850,390"],
  [4, "830,490 855,480 885,510 890,535 960,568 985,570 1015,540 1030,550 1005,612 960,605 960,625 910,680 910,735 890,750 850,670 835,620 805,605 830,590 805,565 825,540"],
  [4, "910,735 928,760 915,770"],
  [3, "890,530 960,560 955,572 895,548"],
  [0, "968,555 990,560 970,566"],
  [3, "1148,635 1165,632 1158,650"],
  [3, "1220,425 1250,410 1245,450 1225,450 1215,435"],
  [4, "1240,455 1262,458 1275,490 1258,492 1248,475"],
  [4, "1325,387 1340,398 1360,403 1345,415 1328,415"],
  [4, "1340,425 1355,440 1365,485 1330,490 1300,500 1290,505 1300,488 1330,475 1345,450"],
  [4, "1285,500 1305,505 1300,522"],
  [4, "1240,580 1248,585 1243,610"],
  [4, "1250,645 1265,650 1262,685 1252,680"],
  [4, "1300,740 1312,765 1305,770 1280,765"],
  [2, "1030,555 1045,560 1050,590 1075,620 1055,645 1065,690 1055,665 1035,670 1030,645 1010,620 1015,590"],
  [3, "1055,640 1080,630 1100,655 1125,670 1120,690 1105,700 1085,690 1080,720 1070,700 1060,680"],
  [3, "1070,700 1075,740 1095,765 1080,760 1068,740"],
  [4, "1090,605 1125,605 1120,640 1160,690 1155,720 1125,745 1128,725 1145,705 1130,650 1105,625"],
  [1, "1080,615 1100,620 1130,650 1145,685 1125,690 1100,655"],
  [2, "1105,700 1125,690 1148,688 1145,710 1125,728 1110,715"],
  [2, "1090,765 1110,775 1125,815 1105,805"],
  [3, "1045,772 1080,790 1130,840 1138,885 1110,870 1070,815"],
  [3, "1135,888 1170,895 1240,910 1300,912 1240,918 1180,908 1140,902"],
  [3, "1165,815 1200,820 1235,790 1245,830 1225,865 1175,855"],
  [2, "1180,815 1210,790 1230,765 1250,775 1235,790 1200,818"],
  [3, "1265,822 1300,820 1270,832 1265,840 1290,842 1272,855 1287,882 1270,868 1258,885"],
  [3, "1360,835 1385,850 1440,855 1440,915 1415,910 1400,880 1370,865"],
  [0, "1442,858 1490,880 1500,915 1520,930 1470,905 1442,918"],
  [0, "1220,1020 1270,995 1310,965 1345,945 1400,945 1390,975 1420,1003 1440,960 1447,930 1465,970 1470,1010 1500,1045 1512,1080 1500,1120 1460,1170 1430,1195 1385,1212 1355,1205 1345,1170 1325,1150 1300,1140 1240,1160 1170,1173 1165,1165 1178,1150 1175,1080 1190,1045"],
  [0, "1370,1220 1405,1222 1390,1250 1368,1255"],
  [0, "1636,1170 1648,1195 1660,1200 1615,1235 1610,1225 1635,1200"],
  [0, "1600,1228 1607,1240 1560,1270 1510,1290 1515,1278 1560,1250"],
  [3, "180,270 205,262 205,280 225,310 232,325 215,335 185,338 200,325 195,305"],
  [2, "148,305 165,293 178,305 172,325 148,325"],
  [3, "280,280 295,272 300,295 285,298"],
  [2, "300,362 390,350 440,362 455,385 438,422 412,440 415,465 400,470 382,440 345,400 325,375"],
  [3, "270,310 325,300 330,325 315,340 325,360 275,360 270,335"],
  [4, "245,330 262,310 272,308 268,345"],
  [3, "185,355 215,352 240,338 280,360 272,380 280,400 245,410 210,400 212,375"],
  [3, "325,300 375,298 395,310 395,345 365,350 330,335"],
  [3, "315,340 340,335 370,350 390,350 385,370 355,378 345,365 320,358"],
  [2, "318,362 350,360 348,372 322,372"],
  [3, "275,365 300,362 298,378 275,380"],
  [3, "275,380 300,370 325,375 312,390 325,410 360,430 358,450 345,430 310,405 295,385"],
  [3, "322,457 345,455 340,468"],
  [3, "288,425 298,428 295,448 287,445"],
  [3, "290,410 297,412 294,422"],
  [2, "150,402 205,403 245,412 225,435 215,455 195,470 165,468 165,420 150,420"],
  [3, "150,418 168,420 162,465 148,462"],
  [1, "380,255 415,252 418,270 410,290 395,305 370,295 375,270"],
  [1, "400,290 430,285 455,300 460,320 400,325"],
  [2, "400,325 455,322 500,335 525,352 520,370 480,375 450,380 440,365 400,355"],
  [2, "395,360 440,362 455,380 440,400 400,400 385,380"],
  [2, "400,402 440,402 435,422 405,420"],
  [3, "345,360 390,350 390,372 350,378"],
  [3, "372,405 384,412 382,440 374,425"],
  [2, "440,430 480,420 560,425 600,430 600,455 560,470 500,465 460,470 440,455"],
  [2, "545,405 590,415 590,425 560,422"],
  [3, "585,425 610,425 615,445 590,440"],
  [3, "484,487 497,485 490,490"],
  [2, "515,470 560,468 545,495 515,505"],
  [2, "560,467 590,465 600,500 618,530 610,545 575,520 545,495"],
  [3, "515,515 540,515 525,540 513,543"],
  [4, "510,495 517,500 513,540 508,525"],
  [0, "540,515 575,520 620,545 650,585 690,605 690,635 665,648 635,655 590,660 560,610 535,570 513,543 525,540"],
  [3, "612,535 625,543 615,548"],
  [3, "646,572 654,575 652,587"],
  [2, "660,590 695,572 690,607 668,605"],
  [0, "695,590 727,612 710,645 675,665 668,645 690,635"],
  [2, "588,662 635,655 665,645 675,665 640,685 592,705"],
];

const africa: [number, string][] = [
  [1, "170,480 205,487 210,510 148,560 148,573 120,573 100,615 78,618 100,580 135,545 145,510"],
  [0, "185,480 290,470 285,490 300,515 305,575 322,600 252,642 148,563 148,555 210,515 205,487"],
  [2, "288,467 308,465 305,485 315,510 302,535 287,495"],
  [0, "315,510 385,530 395,515 428,520 430,635 355,600 322,600 302,575 303,530"],
  [2, "428,520 480,522 507,530 505,550 530,612 432,613"],
  [0, "78,618 105,618 122,573 148,563 165,585 170,675 125,683 105,670 78,665"],
  [0, "165,585 255,642 255,680 215,685 180,712 175,725 150,728 120,705 125,683 170,678"],
  [0, "255,642 322,600 355,602 350,660 340,700 300,700 255,695 250,680"],
  [0, "355,600 425,635 425,675 410,690 415,730 360,755 345,735 350,700 340,680 353,650"],
  [0, "432,613 530,613 545,655 530,700 510,730 460,730 432,740 412,705 412,680 425,672"],
  [2, "75,685 90,667 112,680 120,705 78,700"],
  [1, "80,705 125,705 150,725 152,755 120,750 100,735"],
  [2, "108,740 120,733 128,750 115,757"],
  [1, "125,757 152,755 155,785 130,765"],
  [2, "150,735 190,728 193,778 157,782"],
  [2, "175,722 190,700 225,683 238,705 225,722 190,728"],
  [3, "195,722 232,722 235,768 200,780"],
  [2, "232,715 250,710 248,765 237,766"],
  [3, "252,705 265,698 300,705 340,700 345,725 325,755 300,770 295,787 270,785 262,768 247,765"],
  [1, "345,720 350,730 345,770 355,808 305,808 300,785 325,757"],
  [0, "347,765 415,735 435,752 455,775 445,787 390,783 360,795"],
  [1, "432,740 460,730 500,725 510,730 520,762 505,785 480,790 455,775"],
  [1, "545,655 595,708 560,690 535,690"],
  [1, "585,718 605,725 640,720 642,740 620,745"],
  [2, "535,690 575,692 585,722 625,745 590,785 560,792 522,785 515,755 512,725"],
  [0, "640,720 662,715 640,785 580,850 577,795 590,785 625,750 640,740"],
  [0, "300,808 355,808 360,800 380,797 378,830 360,850 350,875 325,880 298,845"],
  [0, "305,808 325,820 345,815 342,848 325,865 298,845"],
  [1, "388,785 445,790 485,800 478,830 475,870 482,910 468,920 470,950 440,945 410,935 408,900 370,900 365,885 328,887 328,878 350,875 380,820"],
  [3, "488,795 520,790 522,810 500,835 478,838"],
  [2, "522,788 577,793 577,850 560,872 520,845 525,815"],
  [2, "488,838 525,845 560,875 565,938 525,943 515,925 490,910 480,870"],
  [4, "472,850 486,838 485,868 475,868"],
  [-1, "498,832 513,830 512,850 498,850"],
  [1, "328,887 365,885 370,900 408,900 410,935 428,938 410,955 410,1003 325,1000 338,945"],
  [1, "428,940 470,955 468,915 485,910 508,922 505,960 478,985 450,1007 410,1003 410,955"],
  [1, "525,943 568,938 570,985 520,1025 520,1065 497,1080 490,1050 503,995 480,980 510,968 520,995 527,980"],
  [3, "507,922 518,930 525,975 522,995 510,968"],
  [1, "440,1007 478,983 502,995 495,1045 465,1045"],
  [0, "400,1007 440,1007 465,1050 430,1080 395,1090 390,1045"],
  [0, "323,1000 410,1003 435,1003 400,1008 398,1045 388,1050 388,1110 360,1110 340,1045"],
  [1, "360,1110 388,1110 390,1085 430,1080 465,1050 490,1050 497,1085 480,1125 440,1162 375,1168 370,1140"],
  [2, "445,1118 455,1108 465,1118 453,1130"],
  [2, "480,1085 490,1083 490,1096 482,1096"],
  [1, "645,950 652,980 615,1078 592,1075 587,1045 600,990 630,980"],
];

const oldInk: [number, number, string][] = [
  [3, 2.6, "258,250 262,228 295,205 320,180 350,165 385,155 420,160"],
  [3, 2.4, "262,235 290,215 325,182 375,160 410,165"],
  [3, 2.2, "278,92 310,88 340,95 370,85"],
  [3, 2, "300,98 330,105 355,92"],
  [2, 3.4, "460,83 500,84 530,80 565,82"],
  [2, 2.4, "545,145 540,125 565,112 610,108"],
  [2, 2, "545,150 575,155 560,130 580,115"],
  [2, 2, "650,140 670,170 700,190 720,180"],
  [3, 2, "700,155 740,160 690,165"],
  [2, 2, "695,80 760,88 820,100 870,115 890,130"],
  [2, 2, "690,130 740,112 800,118 860,122 885,135"],
  [2, 2, "855,135 900,130 960,138 1010,145"],
  [2, 2.4, "1005,118 1050,122 1095,118"],
  [2, 1.8, "1065,135 1110,148 1180,152 1240,165"],
  [1, 2, "1010,288 1018,305 1000,325"],
  [1, 2, "788,380 800,372 828,375"],
  [1, 2, "1335,370 1320,355 1300,335"],
  [1, 2, "1418,290 1440,295"],
  [1, 2, "1488,315 1520,320"],
  [1, 2, "1535,322 1555,326"],
  [1, 2, "1390,340 1388,370 1365,400"],
  [4, 3.4, "175,275 190,268 185,285 200,280"],
  [3, 2, "400,430 430,435 425,460 440,475 410,485"],
  [2, 2, "325,378 345,398 370,418 385,445"],
  [3, 2, "780,430 805,432 790,440 775,436"],
  [4, 2.4, "1265,690 1285,700 1295,720 1300,740"],
  [4, 2.4, "1275,685 1300,705 1290,730 1280,745"],
  [1, 2, "1255,700 1235,740 1230,752"],
  [2, 2.4, "1325,805 1330,820 1325,845"],
  [1, 3, "1310,862 1330,864 1350,860"],
  [2, 2.4, "1245,925 1290,930 1320,912"],
  [2, 1.8, "1050,800 1070,830 1090,860"],
  [1, 1.5, "1018,680 1020,700"],
  [1, 1.5, "1022,720 1030,745"],
  [1, 2, "1300,575 1305,550"],
  [1, 2, "1495,885 1525,885 1545,868 1520,850"],
  [2, 2.4, "1555,885 1590,905 1615,920"],
  [2, 2, "1655,965 1660,990 1655,1010"],
  [1, 2, "1615,1022 1625,1040 1640,1045"],
  [2, 2, "1740,995 1750,1010 1742,1015"],
  [3, 2, "1345,945 1370,940 1395,950"],
  [2, 2.2, "1265,1000 1300,968 1320,970"],
  [3, 2, "1335,1150 1345,1175 1352,1160 1350,1195"],
  [2, 3, "738,1310 752,1310"],
  [1, 2.4, "515,545 545,590 570,635 585,685"],
  [1, 2, "592,712 630,708 662,712"],
  [2, 3, "76,695 98,698"],
  [1, 4, "228,722 231,745 230,768"],
];

function WorldMap() {
  return (
    <svg viewBox="402 144 1023 938" className="h-full w-full">
      <rect x="402" y="144" width="1023" height="938" fill="#fff" />
      <g transform="translate(460 340) scale(.33333)">
        <Lands list={americas} />
        <Scribbles list={americasInk} />
        <Specks d="265,150 170,240 150,275 372,545 382,650 408,648 418,728 606,775 568,828 575,835 582,830 150,912 158,922 62,992 80,1000 115,975 130,990 190,1008 217,1055 278,1068 152,1100 442,1095 700,1160 712,1160 1110,440 1135,450 1152,458 825,510 1220,508 1210,550 1230,553 1243,548 1148,670 1160,680 1105,820 1238,908 1310,985 1262,1192 1280,1225 1078,868 1048,1415 1165,1375 1175,1390 1170,1405 0,1035 15,1040 18,870 50,940 -160,620 -165,735 -120,900 -90,870 -170,962 -165,970 -60,960 -40,985 -50,1255 800,660 815,652 700,560 712,570 730,590 750,600 780,712 800,715" />
      </g>
      <g transform="translate(840 340) scale(.33333)">
        <Lands list={oldWorld} />
        <Lands list={africa} amp={1.5} />
        <Scribbles list={oldInk} />
        <Specks d="168,152 172,230 210,243 400,92 640,88 638,78 330,127 225,440 240,438 250,432 95,908 172,985 280,825 270,845 278,815 598,945 605,950 620,920 700,875 708,930 690,1035 710,1028 760,1023 670,708 685,706 848,902 855,788 848,720 1460,640 1466,655 1468,670 1465,695 1378,755 1385,760 1415,568 1465,1325 1468,1340 1490,1300 1565,1315 1720,815 1745,952 1700,760 1590,760 1560,775 1622,1112 845,1203 760,1022 122,1192 140,1225 1345,865 1382,888 1375,885 1155,800 1160,790 1150,855 1130,835 1240,640 1290,560 1280,585 1350,880 1360,895 1545,920 1550,935 1650,935 1700,1040 1310,800 1305,790 1020,655 1100,835" />
      </g>
      <g transform="translate(590 790) scale(.44643 .33333)">
        <Lands amp={2.8} list={[[0, "52,250 105,270 1345,270 1398,248 1360,235 1410,210 1430,190 1460,175 1500,160 1470,145 1410,125 1360,115 1300,122 1230,112 1130,120 1075,145 1025,175 1055,130 1015,125 985,113 910,145 880,140 860,152 780,148 710,155 680,158 650,185 580,207 600,222 550,238 490,242 460,230 410,215 400,200 440,197 455,180 430,140 410,130 415,110 445,90 410,95 400,130 385,150 410,165 400,175 330,172 270,165 290,187 200,183 115,185 90,200 60,205 100,215 130,230 60,215 130,240 60,240 150,252"], [0, "510,225 525,207 548,212 545,226"]]} />
        <Scribbles list={[[5, 2, "55,205 100,200 110,190 90,205"], [4, 2, "60,240 110,242 150,252"], [4, 2, "60,215 90,225 130,225"], [4, 2, "160,182 200,180 240,186"], [4, 2, "265,165 290,170 330,172"], [5, 2, "375,150 395,160 400,170"], [5, 2, "380,212 410,208 415,220"], [4, 2, "435,215 460,222 490,235"], [3, 3, "590,222 632,222"], [6, 2.4, "400,130 412,110 435,92 445,85"], [4, 2, "425,135 450,160 452,185"], [2, 1.8, "680,158 710,154 780,149 860,152"], [3, 1.8, "1410,125 1440,135 1470,148 1498,160"], [3, 1.8, "1195,115 1230,114 1300,122"]]} />
      </g>
    </svg>
  );
}

/* ------------------------------------------------------------------ */
/* Layer styling dock                                                  */
/* ------------------------------------------------------------------ */

const combo = "flex items-center justify-between border border-[#1f1f1f] bg-gradient-to-b from-[#565656] to-[#454545] px-[6px]";
const Check = () => <span className="block h-[13px] w-[13px] shrink-0 bg-[#11700f]" />;
const btn = "flex h-6 items-center justify-center border border-[#242424]";

function Row({ h, label, children }: { h: string; label: string; children: ReactNode }) {
  return (
    <div className={`flex items-center ${h}`}>
      <span className="w-[95px] shrink-0 whitespace-nowrap">{label}</span>
      {children}
    </div>
  );
}

function StylingDock() {
  return (
    <div className="flex w-[506px] shrink-0 flex-col pl-[2px] text-[13px] text-[#b4b4b4]">
      <DockTitle>Layer Styling</DockTitle>
      <div className={`ml-[3px] mt-1 h-6 w-[500px] !pl-1 ${combo}`}>
        <span className="flex items-center gap-[6px]"><Icon n="poly" s={15} />{"world_countries"}</span><Down />
      </div>
      <div className="ml-[3px] mt-[6px] flex h-[860px]">
        <div className="flex w-[38px] shrink-0 flex-col items-center border border-[#4e4e4e] bg-[#222222] pt-px">
          <div className="flex h-[31px] w-[34px] items-center justify-center bg-[#11700f]"><Icon n="brush" s={21} /></div>
          {["label", "abcw", "cube", "hier", "hist"].map((n) => (
            <div key={n} className="flex h-[30px] items-center"><Icon n={n} s={22} /></div>
          ))}
        </div>
        <div className="ml-[3px] flex w-[459px] flex-col">
          <div className={`h-6 shrink-0 !pl-[5px] ${combo}`}>
            <span className="flex items-center gap-[6px]"><Icon n="grad" s={15} />Graduated</span><Down />
          </div>
          <div className="mt-[6px]"><Row h="h-[25px]" label="Value">
            <div className={`h-[25px] w-[333px] ${combo}`}><span className="pl-1 pt-px italic">"POP_EST" / ($area / 1000000)</span><Down /></div>
            <div className="ml-[6px] flex h-[25px] w-[25px] items-center justify-center border border-[#242424] bg-[#484848]">
              <svg width="10" height="13" viewBox="0 0 13 15"><path d="M11 3C8-1 1 1 3 5c1 2 3 2 5 2C3 7 0 9 1 12c2 4 8 3 11 0" fill="none" stroke="#68406f" strokeWidth="2" /></svg>
            </div>
          </Row></div>
          <div className="mt-[6px]"><Row h="h-[22px]" label="Symbol">
            <div className={`h-[22px] w-[364px] !px-[3px] ${combo}`}><span className="mr-[5px] h-[10px] flex-1 border border-[#8e6350] bg-[#ad755e]" /><Down /></div>
          </Row></div>
          <div className="mt-[6px]"><Row h="h-[24px]" label="Legend format">
            <div className="flex h-6 w-[205px] items-center border border-[#1a1a1a] bg-[#8a8a8a] px-[4px] font-medium text-[#111]">%1 - %2</div>
            <div className={`ml-[6px] h-6 w-[97px] !px-[2px] ${combo}`}>
              <span className="w-[56px] whitespace-nowrap tracking-[-0.15px]">recision (</span>
              <svg width="13" height="11" viewBox="0 0 13 11" className="shrink-0"><path d="M0 5.500L4 0h9v11H4z" fill="#d0d0d0" /><path d="M5 3l5 5M10 3L5 8" stroke="#333" strokeWidth="1.300" /></svg>
              <span className="ml-3 mr-[3px]"><Spin /></span>
            </div>
            <span className="ml-[7px] flex items-center gap-[7px]"><Check />Trim</span>
          </Row></div>
          <div className="mt-[6px]"><Row h="h-[28px]" label="Color ramp">
            <div className={`h-[28px] w-[364px] !p-0 !pl-[2px] ${combo}`}>
              <span className="h-[15px] flex-1 bg-[linear-gradient(90deg,#f7fcf5,#e5f5e0_13%,#c7e9c0_26%,#a1d99b_39%,#74c476_52%,#41ab5d_65%,#238b45_78%,#006d2c_90%,#00441b)]" />
              <span className="flex h-full w-[14px] items-center justify-center border-l border-[#1f1f1f]"><Down /></span>
            </div>
          </Row></div>
          <div className="mt-[6px] flex h-[26px] items-end">
            <div className="flex h-[26px] w-[76px] items-center justify-center border border-b-0 border-[#5a5a5a] pr-px">Classes</div>
            <div className="flex h-[21px] w-[90px] items-center justify-center border-b border-r border-t border-[#5a5a5a] pt-[2px]">Histogram</div>
            <div className="flex-1 border-b border-[#5a5a5a]" />
          </div>
          <div className="ml-px mr-px mt-[9px] h-[520px] shrink-0 border border-[#5a5a5a] bg-[#222222] p-[1px]">
            <div className="mx-px mt-px flex h-[23px] items-center border-b border-[#606060] bg-[#303030] text-[11px] tracking-[0.3px]">
              <div className="flex h-full w-[83px] items-center justify-between border-r border-[#5a5a5a] pl-[3px] pr-[6px]">Symbol<span className="h-0 w-0 border-x-[3px] border-t-[6px] border-x-transparent border-t-[#b4b4b4]" /></div>
              <div className="flex h-full w-[132px] items-center border-r border-[#5a5a5a] pl-[3px]">Values</div>
              <div className="pl-[3px]">Legend</div>
            </div>
            <div>
              {classes.map((k) => (
                <div key={k.legend} className="flex h-7 items-center border-b-2 border-[#303030] text-[#e0e0e0]">
                  <span className="ml-[5px] mt-[3px]"><EyeIcon /></span>
                  <span className={`ml-[9px] mt-[2px] h-4 w-4 border border-[#8a8a8a]/40 ${k.c}`} />
                  <span className="ml-[42px] w-[132px] whitespace-nowrap pb-[3px]">{k.values}</span>
                  <span className="pb-[3px]">{k.legend}</span>
                </div>
              ))}
            </div>
          </div>
          <div className="relative mt-[6px] flex h-6 shrink-0 items-center">
            <span className="w-[42px] pl-px">Mode</span>
            <div className={`h-6 w-[197px] !pl-[3px] ${combo}`}><span className="flex items-center gap-[6px]"><Icon n="quant" s={16} />Equal Count (Quantile)</span><Down /></div>
            <span className="ml-auto">Classes</span>
            <div className={`ml-[7px] mr-px h-6 w-[69px] !px-[5px] ${combo}`}>5<Spin /></div>
            <div className="absolute -left-[5px] -top-[9px] z-10 h-[44px] w-[252px] border-4 border-[#fbf07e]" />
          </div>
          <div className="mt-[6px] flex h-6 shrink-0 items-center">
            <div className={`ml-px w-14 ${btn}`}>Classify</div>
            <div className={`ml-[6px] w-7 ${btn}`}><svg width="14" height="14" viewBox="0 0 14 14"><path d="M5 1h4v4h4v4H9v4H5V9H1V5h4z" fill="#3e8a4c" stroke="#e8f0e8" strokeWidth="1.200" /></svg></div>
            <div className={`ml-[6px] w-7 ${btn}`}><span className="h-[6px] w-[14px] border border-[#f0d0d0] bg-[#d0303a]" /></div>
            <div className={`ml-[6px] w-[66px] whitespace-nowrap ${btn}`}>Delete All</div>
            <div className={`ml-auto mr-px w-[80px] gap-[5px] ${btn}`}>Advanced<span className="mt-2 h-0 w-0 border-x-[4px] border-t-4 border-x-transparent border-t-[#8a8a8a]" /></div>
          </div>
          <div className="mt-[5px] flex h-[18px] shrink-0 items-center gap-[7px] pl-[2px]"><Check />Link class boundaries</div>
          <div className="mt-[16px] flex h-[20px] shrink-0 items-center pl-[5px] font-bold text-[#e6e6e6]">
            <svg width="8" height="12" viewBox="0 0 8 12"><path d="M1 1l6 5-6 5z" fill="#333" stroke="#111" strokeWidth="1.300" /></svg>
            <span className="ml-[9px]">Layer Rendering</span>
          </div>
          <div className="mt-[8px] flex h-[25px] shrink-0 items-center">
            <div className="flex h-[25px] w-[25px] items-center justify-center border border-[#242424] bg-[#4a4a4a]"><Icon n="orange" s={14} /></div>
            <div className="ml-[6px] flex h-[25px] w-[25px] items-center justify-center border border-[#242424] bg-[#4a4a4a]"><Icon n="green" s={14} /></div>
            <div className="ml-auto flex items-center gap-[7px]"><Check />Live update</div>
            <div className={`ml-[8px] w-[43px] ${btn}`}>Apply</div>
          </div>
        </div>
      </div>
      <div className="mt-[3px] flex h-[26px] items-start">
        <div className="flex h-[26px] w-[108px] items-center justify-center border border-t-0 border-[#5a5a5a]">Layer Styling</div>
        <div className="flex h-[21px] w-[146px] items-center justify-center border-b border-r border-[#5a5a5a]">Processing Toolbox</div>
      </div>
    </div>
  );
}

/* ------------------------------------------------------------------ */
/* Status bar                                                          */
/* ------------------------------------------------------------------ */

function StatusBar() {
  return (
    <div className="flex h-[27px] shrink-0 items-end text-[11px] tracking-[0.25px] text-[#b4b4b4]">
      <div className="flex h-[23px] w-[214px] shrink-0 items-center border border-[#161616] bg-[#848484] pl-2 pt-[2px] text-[13px] tracking-normal text-[#4c4c4c]">
        <svg width="13" height="13" viewBox="0 0 13 13"><circle cx="5" cy="5" r="4" fill="none" stroke="#979797" strokeWidth="1.500" /><path d="M8 8l4 4" stroke="#979797" strokeWidth="2" /></svg>
        <span className="ml-[9px]">Type to locate (⌘K)</span>
      </div>
      <div className="flex h-[23px] flex-1 items-center pt-[2px]">
        <span className="ml-[10px] w-[794px] shrink-0 text-[#555]">Ready</span>
        <span className="w-[61px] shrink-0">Coordinate</span>
        <div className="-mt-[2px] flex h-[22px] w-[126px] shrink-0 items-center justify-center border border-[#161616] bg-[#8a8a8a] pt-px font-medium text-[#111]">16435298,-8713266</div>
        <svg width="16" height="16" viewBox="0 0 16 16" className="ml-[5px] shrink-0"><path d="M3 1l4 6M8 0l1 7M1 7l6 4M2 11l4 3" stroke="#ddd" strokeWidth="2" /><circle cx="10" cy="11" r="4.500" fill="#bbb" stroke="#eee" /><circle cx="10" cy="11" r="1.500" fill="#222" /></svg>
        <span className="ml-[14px] w-[33px] shrink-0">Scale</span>
        <div className={`h-[23px] w-[120px] shrink-0 !px-[5px] ${combo}`}>1:92712928<Down /></div>
        <svg width="12" height="16" viewBox="0 0 12 16" className="ml-[12px] shrink-0"><path d="M3 8V4.500a3 3 0 0 1 6 0V8" fill="none" stroke="#ccc" strokeWidth="1.800" /><rect x="0" y="7" width="12" height="8" rx="1" fill="#777" /></svg>
        <span className="ml-[10px] w-[54px] shrink-0">Magnifier</span>
        <div className={`h-[23px] w-[90px] shrink-0 !px-[4px] ${combo}`}>100%<Spin /></div>
        <span className="ml-[9px] w-[53px] shrink-0">Rotation</span>
        <div className={`h-[23px] w-[92px] shrink-0 !px-[4px] ${combo}`}>0.0 °<Spin /></div>
        <span className="ml-2"><Check /></span>
        <span className="ml-[7px] w-[51px] shrink-0">Render</span>
        <svg width="14" height="14" viewBox="0 0 14 14" className="shrink-0"><circle cx="7" cy="7" r="6.500" fill="#ccc" /><path d="M1 5h12M1 9h12M7 0v14M4 1c-2 4-2 8 0 12M10 1c2 4 2 8 0 12" stroke="#333" strokeWidth=".7" fill="none" /></svg>
        <span className="ml-[3px] w-[63px] whitespace-nowrap tracking-[0.1px]">ESRI:54030</span>
        <svg width="18" height="16" viewBox="0 0 18 16" className="ml-[21px] shrink-0"><ellipse cx="9" cy="7" rx="8" ry="6.500" fill="#6c6c6c" /><path d="M10 12l6 4-1-6z" fill="#6c6c6c" /></svg>
      </div>
    </div>
  );
}

export default function App() {
  return (
    <div className="flex h-[1109px] w-[1937px] flex-col overflow-hidden bg-[#323232] font-['Inter','Liberation_Sans',sans-serif] leading-none">
      <div className="flex h-[27px] shrink-0 items-center border-b border-black pb-[2px]">
        <div className="flex w-[120px] gap-[8px] pl-[4px]">
          <span className="h-3 w-3 rounded-full bg-[#ff5f57]" />
          <span className="h-3 w-3 rounded-full bg-[#febc2e]" />
          <span className="h-3 w-3 rounded-full bg-[#28c840]" />
        </div>
        <div className="flex-1 pr-[125px] text-center text-[13px] font-bold tracking-[0.1px] text-[#b2b2b2]">*Untitled Project — QGIS</div>
      </div>
      <div className="h-[117px] shrink-0"><Toolbars /></div>
      <div className="flex h-[938px] shrink-0">
        <LeftDocks />
        <div className="ml-[6px] w-[1025px] shrink-0 border-x border-[#1c1c1c]"><WorldMap /></div>
        <div className="ml-[4px]"><StylingDock /></div>
      </div>
      <StatusBar />
    </div>
  );
}
